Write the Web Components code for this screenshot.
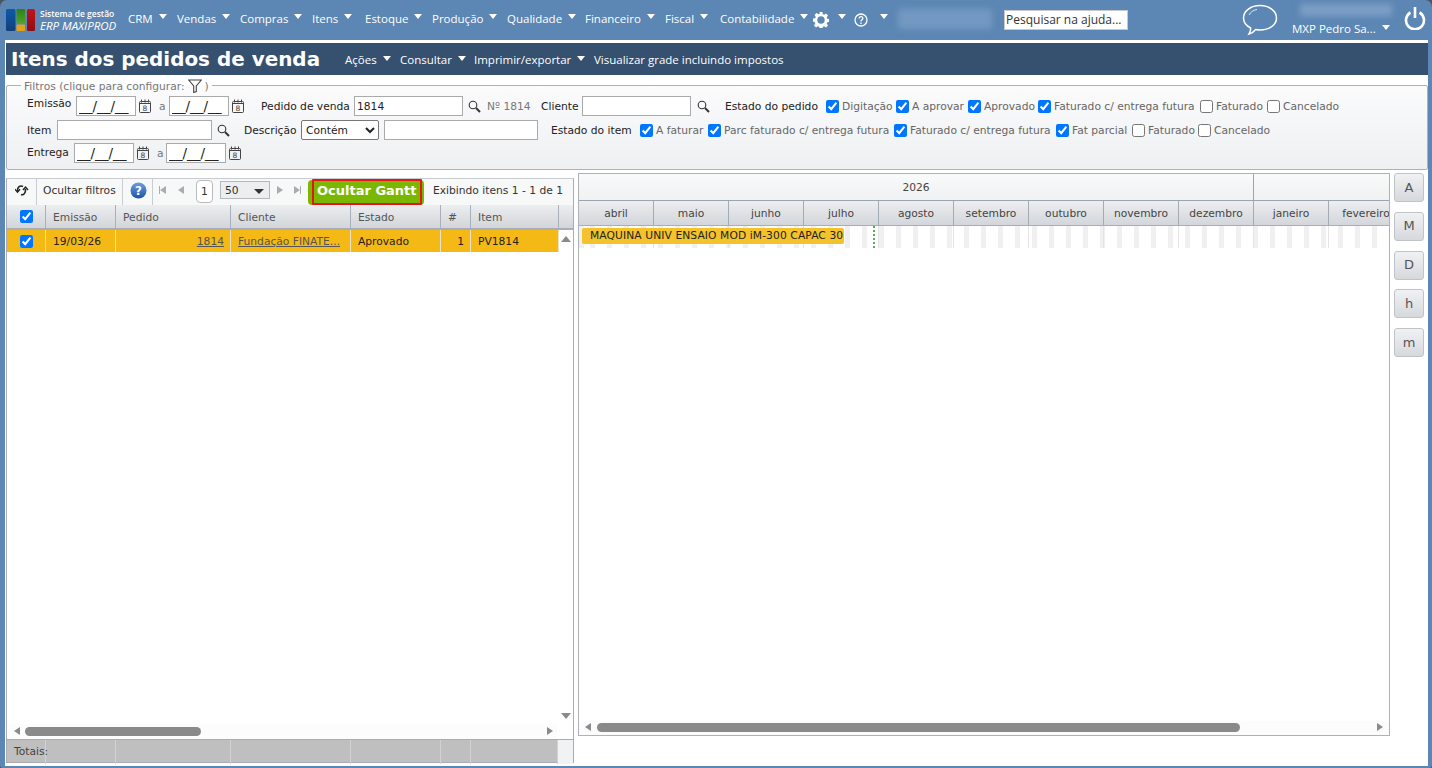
<!DOCTYPE html>
<html lang="pt-BR">
<head>
<meta charset="utf-8">
<title>Itens dos pedidos de venda</title>
<style>
    html, body { margin: 0; height: 100%; background: #4a5560; overflow: hidden; }
    body { font-family: "DejaVu Sans", sans-serif; font-size: 10.7px; color: #222; }
</style>
</head>
<body>
<the-app>
    <the-topbar></the-topbar>
    <the-page>
        <the-titlebar></the-titlebar>
        <the-filters></the-filters>
        <the-main>
            <the-grid></the-grid>
            <the-gantt></the-gantt>
            <the-scales></the-scales>
        </the-main>
    </the-page>
</the-app>

<script>
const ICON_SEARCH = `<svg width="13" height="13" viewBox="0 0 13 13" fill="none" stroke="#333"><circle cx="5" cy="5" r="3.8" stroke-width="1.1"/><path d="M8 8l4 4" stroke-width="2"/></svg>`
const ICON_CAL = `<svg width="12" height="14" viewBox="0 0 12 14" fill="none" stroke="#444"><rect x=".5" y="2.5" width="11" height="11" rx="1"/><path d="M2.5 0.5v3M6 0.5v3M9.5 0.5v3" /><path d="M1 4.5h10" /><text x="6" y="12" font-size="7.5" font-family="DejaVu Sans" text-anchor="middle" fill="#444" stroke="none">8</text></svg>`

class TheApp extends HTMLElement {
    constructor() {
        super()
        const shadow = this.attachShadow({ mode: 'open' })
        shadow.innerHTML = `
        <style>
            :host {
                display: flex;
                flex-direction: column;
                width: 1432px;
                height: 768px;
                box-sizing: border-box;
                background: #5c86b3;
                border-radius: 7px 7px 3px 3px;
                overflow: hidden;
            }
        </style>
        <slot></slot>
        `
    }
}

class TheMenuItem extends HTMLElement {
    constructor() {
        super()
        const shadow = this.attachShadow({ mode: 'open' })
        shadow.innerHTML = `
        <style>
            :host {
                display: flex;
                align-items: center;
                flex: none;
                color: #fff;
                white-space: nowrap;
                font-family: var(--menu-font, "DejaVu Sans", sans-serif);
                font-size: var(--menu-size, 11px);
            }
            .arrow {
                width: 0;
                height: 0;
                margin-left: 6px;
                margin-top: -3px;
                border-left: 4.5px solid transparent;
                border-right: 4.5px solid transparent;
                border-top: 5px solid #fff;
            }
        </style>
        <slot></slot><span class="arrow"></span>
        `
    }
}

class TheTopbar extends HTMLElement {
    constructor() {
        super()
        const shadow = this.attachShadow({ mode: 'open' })
        shadow.innerHTML = `
        <style>
            :host {
                display: flex;
                align-items: center;
                flex: none;
                height: 40px;
                box-sizing: border-box;
                padding-left: 6px;
                color: #fff;
                font-family: "Open Sans", sans-serif;
                --menu-font: "Open Sans", sans-serif;
                --menu-size: 11.5px;
            }
            .logo { flex: none; width: 29px; height: 22px; }
            .brand {
                flex: none;
                width: 88px;
                margin-left: 5px;
                line-height: 11px;
                font-size: 8.5px;
                font-family: "Open Sans", sans-serif;
                white-space: nowrap;
            }
            .brand b { display: block; font-weight: 600; }
            .brand i { display: block; font-size: 11.5px; line-height: 13px; font-style: italic; font-weight: 500; }
            .menu { display: flex; align-items: center; height: 100%; margin-top: -4px; }
            .menu svg { margin-top: 3px; }
            .blur-a {
                flex: none;
                width: 94px;
                height: 20px;
                margin-left: 10px;
                margin-top: -3px;
                background: #7399c2;
                filter: blur(3px);
            }
            .search {
                flex: none;
                box-sizing: border-box;
                width: 124px;
                height: 20px;
                margin-left: 12px;
                margin-top: -1px;
                padding: 0 0 0 1px;
                border: 1px solid #c8c8c8;
                background: #fff;
                font: 12px "Open Sans", sans-serif;
                color: #333;
            }
            .chat { flex: none; margin-left: 114px; }
            .user { flex: none; width: 104px; margin-left: 14px; }
            .blur-b { width: 92px; height: 12px; margin: 0 0 5px 8px; background: #7d9fc6; filter: blur(3px); }
            .power { flex: none; margin-left: 8px; margin-top: -4px; }
        </style>
        <svg class="logo" viewBox="0 0 29 22">
            <defs>
                <linearGradient id="lb" x1="0" y1="0" x2="0" y2="1"><stop offset="0" stop-color="#0d5aa8"/><stop offset="1" stop-color="#123f7c"/></linearGradient>
                <linearGradient id="lg" x1="0" y1="0" x2="0" y2="1"><stop offset="0" stop-color="#2f7f1a"/><stop offset="1" stop-color="#4fa324"/></linearGradient>
                <linearGradient id="lr" x1="0" y1="0" x2="0" y2="1"><stop offset="0" stop-color="#c4141a"/><stop offset="1" stop-color="#8f0d12"/></linearGradient>
            </defs>
            <rect x="0" y="0" width="9.500" height="22" rx="1.500" fill="url(#lb)"/>
            <rect x="10.500" y="0" width="8.500" height="14" rx="1" fill="url(#lg)"/>
            <rect x="10.500" y="15.500" width="8.500" height="6.500" rx="1" fill="#e2a413"/>
            <rect x="21" y="0" width="8" height="22" rx="1.500" fill="url(#lr)"/>
        </svg>
        <div class="brand"><b>Sistema de gestão</b><i>ERP MAXIPROD</i></div>
        <div class="menu">
            <the-menu-item style="width:49px">CRM</the-menu-item>
            <the-menu-item style="width:63px">Vendas</the-menu-item>
            <the-menu-item style="width:72px">Compras</the-menu-item>
            <the-menu-item style="width:53px">Itens</the-menu-item>
            <the-menu-item style="width:67px">Estoque</the-menu-item>
            <the-menu-item style="width:75px">Produção</the-menu-item>
            <the-menu-item style="width:78px">Qualidade</the-menu-item>
            <the-menu-item style="width:80px">Financeiro</the-menu-item>
            <the-menu-item style="width:55px">Fiscal</the-menu-item>
            <the-menu-item style="width:93px">Contabilidade</the-menu-item>
            <the-menu-item style="width:41px"><svg width="16" height="16" viewBox="0 0 16 16"><path fill="#fff" fill-rule="evenodd" d="M6.600 0h2.800l.4 2.200 1.300.6 1.900-1.300 2 2-1.300 1.900.6 1.300 2.200.4v2.800l-2.200.4-.6 1.300 1.300 1.900-2 2-1.900-1.300-1.300.6-.4 2.200H6.600l-.4-2.200-1.300-.6-1.900 1.300-2-2 1.300-1.900-.6-1.300L0 9.400V6.600l2.200-.4.6-1.300L1.500 3l2-2 1.900 1.300 1.300-.6zM8 4.300a3.700 3.700 0 100 7.400 3.700 3.700 0 000-7.400z"/></svg><span style="width:3px"></span></the-menu-item>
            <the-menu-item><svg width="14" height="14" viewBox="0 0 14 14" fill="none" stroke="#fff" stroke-width="1.300"><circle cx="7" cy="7" r="6"/><path d="M5.200 5.400c0-2.400 3.800-2.200 3.600 0 0 1.400-1.800 1.400-1.800 3"/><path d="M7 9.600v1.400"/></svg><span style="width:6px"></span></the-menu-item>
        </div>
        <div class="blur-a"></div>
        <input class="search" value="Pesquisar na ajuda...">
        <svg class="chat" width="36" height="32" viewBox="0 0 36 32" fill="none" stroke="#fff" stroke-width="1.500">
            <path d="M18 1.500c9 0 16.500 5.300 16.500 12.500S27 26 18 26c-1.500 0-3-.2-4.300-.5-1.500 2-4 3.700-6.700 4.500 1-1.600 1.700-3.500 1.700-6C4 21.700 1.500 18 1.500 14 1.500 6.800 9 1.500 18 1.500z"/>
            <path d="M7 11c1.500-3 4.500-5 8-5.500" stroke-width="1" opacity=".8"/>
        </svg>
        <div class="user">
            <div class="blur-b"></div>
            <the-menu-item>MXP Pedro Sa...</the-menu-item>
        </div>
        <svg class="power" width="22" height="24" viewBox="0 0 22 24" fill="none" stroke="#fff" stroke-width="2.600">
            <path d="M6.500 6.500a9 9 0 109 0"/>
            <path d="M11 1v11"/>
        </svg>
        `
    }
}

class ThePage extends HTMLElement {
    constructor() {
        super()
        const shadow = this.attachShadow({ mode: 'open' })
        shadow.innerHTML = `
        <style>
            :host {
                display: flex;
                flex-direction: column;
                flex: none;
                height: 726px;
                margin: 0 4px 2px 5px;
                padding: 3px 0 0 1px;
                box-sizing: border-box;
                background: #fff;
            }
        </style>
        <slot></slot>
        `
    }
}

class TheTitlebar extends HTMLElement {
    constructor() {
        super()
        const shadow = this.attachShadow({ mode: 'open' })
        shadow.innerHTML = `
        <style>
            :host {
                display: flex;
                align-items: center;
                flex: none;
                height: 32px;
                padding-left: 5px;
                background: #36506f;
                color: #fff;
                --menu-font: "Open Sans", sans-serif;
                --menu-size: 11.5px;
            }
            h1 {
                margin: 0 25px 0 0;
                width: 309px;
                font: bold 19.95px "DejaVu Sans", sans-serif;
                white-space: nowrap;
            }
            .menu { display: flex; align-items: center; margin-top: 1px; }
            .plain { font: 11.5px "Open Sans", sans-serif; }
        </style>
        <h1>Itens dos pedidos de venda</h1>
        <div class="menu">
            <the-menu-item style="width:55px">Ações</the-menu-item>
            <the-menu-item style="width:74px">Consultar</the-menu-item>
            <the-menu-item style="width:120px">Imprimir/exportar</the-menu-item>
            <span class="plain">Visualizar grade incluindo impostos</span>
        </div>
        `
    }
}

class TheCheck extends HTMLElement {
    constructor() {
        super()
        const shadow = this.attachShadow({ mode: 'open' })
        const on = this.hasAttribute('on') ? 'checked' : ''
        shadow.innerHTML = `
        <style>
            :host {
                display: inline-flex;
                align-items: center;
                flex: none;
                color: #666;
                white-space: nowrap;
            }
            input {
                width: 13px;
                height: 13px;
                margin: 0 3px 0 0;
                accent-color: #0075ff;
            }
        </style>
        <input type="checkbox" ${on}><slot></slot>
        `
    }
}

class TheFilters extends HTMLElement {
    constructor() {
        super()
        const shadow = this.attachShadow({ mode: 'open' })
        shadow.innerHTML = `
        <style>
            :host {
                display: block;
                flex: none;
                position: relative;
                height: 85px;
                margin-top: 10px;
                box-sizing: border-box;
                padding: 10px 0 0 20px;
                border: 1px solid #aeb2b6;
                border-radius: 2px;
                background: linear-gradient(#fbfbfc, #eef0f2);
                font-size: 10.7px;
                color: #222;
            }
            .legend {
                position: absolute;
                top: -6px;
                left: 14px;
                padding: 0 3px;
                display: flex;
                align-items: center;
                gap: 3px;
                background: linear-gradient(#fff 5px, #fbfbfc 5px);
                color: #777;
                line-height: 12px;
            }
            .legend svg { transform: translateY(-1px); }
            .row { display: flex; align-items: center; height: 20px; margin-bottom: 3px; white-space: nowrap; }
            .row2 { margin-top: 4px; }
            input[type=text] {
                box-sizing: border-box;
                height: 20px;
                padding: 0 2px;
                flex: none;
                border: 1px solid #aaa;
                background: #fff;
                font: 10.7px "DejaVu Sans", sans-serif;
                color: #222;
            }
            input.date { width: 60px; font-size: 13.5px; }
            select {
                box-sizing: border-box;
                width: 78px;
                height: 20px;
                flex: none;
                border: 1px solid #777;
                border-radius: 2px;
                background: #fff;
                font: 10.7px "DejaVu Sans", sans-serif;
                color: #222;
            }
            .muted { color: #777; }
            svg { flex: none; }
        </style>
        <div class="legend">Filtros (clique para configurar:
            <svg width="14" height="14" viewBox="0 0 14 14" fill="none" stroke="#444" stroke-width="1.100"><path d="M.7 1h12.600L8.300 7v5.500l-2.600 1V7z"/></svg>)
        </div>
        <div class="row">
            <span style="width:49px;margin-top:-6px">Emissão</span>
            <input class="date" type="text" value="__/__/__">
            <span style="margin-left:3px;display:flex">${ICON_CAL}</span>
            <span class="muted" style="margin-left:8px;width:10px">a</span>
            <input class="date" type="text" value="__/__/__">
            <span style="margin-left:3px;display:flex">${ICON_CAL}</span>
            <span style="margin-left:17px;width:93px">Pedido de venda</span>
            <input type="text" value="1814" style="width:109px">
            <span style="margin-left:5px;width:19px;display:flex">${ICON_SEARCH}</span>
            <span class="muted" style="width:54px">Nº 1814</span>
            <span style="width:41px">Cliente</span>
            <input type="text" style="width:109px">
            <span style="margin-left:6px;width:28px;display:flex">${ICON_SEARCH}</span>
            <span style="width:101px">Estado do pedido</span>
            <the-check on style="width:70px">Digitação</the-check>
            <the-check on style="width:72px">A aprovar</the-check>
            <the-check on style="width:70px">Aprovado</the-check>
            <the-check on style="width:162px">Faturado c/ entrega futura</the-check>
            <the-check style="width:67px">Faturado</the-check>
            <the-check>Cancelado</the-check>
        </div>
        <div class="row row2">
            <span style="width:30px">Item</span>
            <input type="text" style="width:155px">
            <span style="margin-left:5px;width:27px;display:flex">${ICON_SEARCH}</span>
            <span style="width:57px">Descrição</span>
            <select><option>Contém</option></select>
            <input type="text" style="width:154px;margin-left:5px">
            <span style="margin-left:13px;width:89px">Estado do item</span>
            <the-check on style="width:68px">A faturar</the-check>
            <the-check on style="width:186px">Parc faturado c/ entrega futura</the-check>
            <the-check on style="width:162px">Faturado c/ entrega futura</the-check>
            <the-check on style="width:76px">Fat parcial</the-check>
            <the-check style="width:66px">Faturado</the-check>
            <the-check>Cancelado</the-check>
        </div>
        <div class="row">
            <span style="width:47px;margin-top:-2px">Entrega</span>
            <input class="date" type="text" value="__/__/__">
            <span style="margin-left:3px;display:flex">${ICON_CAL}</span>
            <span class="muted" style="margin-left:8px;width:9px">a</span>
            <input class="date" type="text" value="__/__/__">
            <span style="margin-left:3px;display:flex">${ICON_CAL}</span>
        </div>
        `
    }
}

class TheMain extends HTMLElement {
    constructor() {
        super()
        const shadow = this.attachShadow({ mode: 'open' })
        shadow.innerHTML = `
        <style>
            :host { display: flex; align-items: flex-start; flex: none; margin-top: 3px; }
        </style>
        <slot></slot>
        `
    }
}

class TheGrid extends HTMLElement {
    constructor() {
        super()
        const shadow = this.attachShadow({ mode: 'open' })
        const cols = '39px 70px 115px 120px 90px 30px 88px 1fr'
        shadow.innerHTML = `
        <style>
            :host {
                display: flex;
                flex-direction: column;
                flex: none;
                width: 568px;
                height: 585px;
                margin-top: 5px;
                box-sizing: border-box;
                border: 1px solid #a9adb3;
                border-top: 1px solid #c8ccd0;
                font-size: 10.7px;
                color: #222;
            }
            .tools {
                display: flex;
                align-items: center;
                flex: none;
                height: 26px;
                box-sizing: border-box;
                padding-bottom: 4px;
                white-space: nowrap;
                color: #333;
                background: #f7f8f8;
            }
            .sep { flex: none; align-self: flex-start; width: 1px; height: 26px; background: #c9cdd1; }
            .nav { flex: none; width: 0; height: 0; border-top: 4px solid transparent; border-bottom: 4px solid transparent; }
            .nav.l { border-right: 6px solid #a8adb2; }
            .nav.r { border-left: 6px solid #a8adb2; }
            .bar { flex: none; width: 1px; height: 8px; background: #a8adb2; }
            .page {
                flex: none;
                align-self: flex-start;
                margin-top: 1px;
                box-sizing: border-box;
                width: 17px;
                height: 23px;
                line-height: 22px;
                text-align: center;
                border: 1px solid #bbb;
                border-radius: 4px;
                background: #fff;
            }
            .size {
                flex: none;
                display: flex;
                align-items: center;
                justify-content: space-between;
                box-sizing: border-box;
                width: 50px;
                height: 18px;
                padding: 0 5px 0 4px;
                border: 1px solid #b5b9bd;
                background: #eceef0;
            }
            .size i { width: 0; height: 0; border-left: 5px solid transparent; border-right: 5px solid transparent; border-top: 5px solid #333; margin-top: 3px; }
            .gantt {
                flex: none;
                align-self: flex-start;
                margin-top: 1px;
                box-sizing: border-box;
                width: 116px;
                height: 25px;
                padding-left: 4px;
                background: #7ab800;
                border-radius: 4px;
                position: relative;
                color: #fff;
                font: bold 13px/21px "DejaVu Sans", sans-serif;
            }
            .gantt::after {
                content: "";
                position: absolute;
                left: 4px;
                right: 2px;
                top: -1px;
                bottom: 0;
                border: 2px solid #e8141c;
                border-radius: 1px;
            }
            .gantt span { display: block; padding-left: 5px; }
            .head, .row { display: grid; grid-template-columns: ${cols}; flex: none; }
            .head {
                height: 25px;
                box-sizing: border-box;
                background: linear-gradient(#eceef0, #d2d5d9);
                border-bottom: 2px solid #a9adb8;
                color: #555;
            }
            .head > div { display: flex; align-items: center; padding: 1px 0 0 7px; border-right: 1px solid #a9b0ba; }
            .head > div:first-child, .row > div:first-child { justify-content: center; padding: 0; }
            .head > div:last-child { border-right: 0; }
            .row { height: 22px; background: linear-gradient(90deg, #f5b915 551px, #fff 551px); }
            .row > div { display: flex; align-items: center; padding: 0 6px 0 7px; border-right: 1px solid #e9e2c8; white-space: nowrap; overflow: hidden; }
            .row > div:last-child { border-right: 0; }
            .row a { color: #555; text-decoration: underline; }
            .end { justify-content: flex-end; }
            input { width: 13px; height: 13px; margin: 0; accent-color: #0075ff; }
            .body { position: relative; flex: 1; min-height: 0; }
            .up, .down { position: absolute; left: 554px; width: 0; height: 0; border-left: 5px solid transparent; border-right: 5px solid transparent; }
            .up { top: -16px; border-bottom: 6px solid #8a8a8a; }
            .down { bottom: 20px; border-top: 6px solid #8a8a8a; }
            .hscroll { position: absolute; left: 0; right: 16px; bottom: 0; height: 15px; background: #fcfcfc; }
            .thumb { position: absolute; left: 18px; top: 3px; width: 176px; height: 9px; border-radius: 5px; background: #8a8a8a; }
            .al, .ar { position: absolute; top: 3px; width: 0; height: 0; border-top: 4.500px solid transparent; border-bottom: 4.500px solid transparent; }
            .al { left: 7px; border-right: 6px solid #8a8a8a; }
            .ar { left: 540px; border-left: 6px solid #8a8a8a; }
            .totals {
                display: grid;
                grid-template-columns: 39px 70px 115px 120px 90px 30px 87px 1fr;
                flex: none;
                height: 23px;
                box-sizing: border-box;
                border-top: 1px solid #a9adb3;
                background: #bfbfbf;
                color: #444;
            }
            .totals > div { border-right: 1px solid #d2d2d2; line-height: 24px; padding-left: 7px; white-space: nowrap; }
            .totals > div:last-child { border-right: 0; background: #f0f2f4; }
        </style>
        <div class="tools">
            <span style="width:29px;display:flex;justify-content:center">
                <svg width="14" height="13" viewBox="0 0 14 13" fill="none" stroke="#222" stroke-width="1.600">
                    <path d="M8 2.500C5 1 2.300 3 2.500 7"/>
                    <path d="M6 10.500C8.500 11.500 10.700 9.500 10.500 5"/>
                    <path d="M0 5.200l2.500 3 2.500-3M8 6l2.500-3L13 6" stroke-width="1.400"/>
                </svg>
            </span>
            <span class="sep"></span>
            <span style="margin-left:6px;width:79px">Ocultar filtros</span>
            <span class="sep"></span>
            <svg style="margin-left:7px;flex:none" width="17" height="17" viewBox="0 0 17 17">
                <defs><linearGradient id="h" x1="0" y1="0" x2="0" y2="1"><stop offset="0" stop-color="#6a9ee0"/><stop offset="1" stop-color="#1f52a8"/></linearGradient></defs>
                <circle cx="8.500" cy="8.500" r="8" fill="url(#h)"/>
                <text x="8.500" y="13" font-size="12" font-weight="bold" font-family="DejaVu Sans" fill="#fff" text-anchor="middle">?</text>
            </svg>
            <span class="sep" style="margin-left:5px"></span>
            <span class="bar" style="margin-left:6px"></span><span class="nav l"></span>
            <span class="nav l" style="margin-left:12px"></span>
            <span class="page" style="margin-left:12px">1</span>
            <span class="size" style="margin-left:7px">50<i></i></span>
            <span class="nav r" style="margin-left:7px"></span>
            <span class="nav r" style="margin-left:11px"></span><span class="bar"></span>
            <span class="gantt" style="margin-left:7px"><span>Ocultar Gantt</span></span>
            <span style="margin-left:9px">Exibindo itens 1 - 1 de 1</span>
        </div>
        <div class="head">
            <div><input type="checkbox" checked></div>
            <div>Emissão</div><div>Pedido</div><div>Cliente</div><div>Estado</div><div>#</div><div>Item</div><div></div>
        </div>
        <div class="row">
            <div><input type="checkbox" checked></div>
            <div>19/03/26</div>
            <div class="end"><a>1814</a></div>
            <div><a>Fundação FINATE...</a></div>
            <div>Aprovado</div>
            <div class="end">1</div>
            <div>PV1814</div>
            <div></div>
        </div>
        <div class="body">
            <span class="up"></span>
            <span class="down"></span>
            <div class="hscroll"><span class="al"></span><div class="thumb"></div><span class="ar"></span></div>
        </div>
        <div class="totals">
            <div style="overflow:visible">Totais:</div><div></div><div></div><div></div><div></div><div></div><div></div><div></div>
        </div>
        `
    }
}

class TheGantt extends HTMLElement {
    constructor() {
        super()
        const shadow = this.attachShadow({ mode: 'open' })
        const months = ['abril', 'maio', 'junho', 'julho', 'agosto', 'setembro', 'outubro', 'novembro', 'dezembro', 'janeiro', 'fevereiro']
        shadow.innerHTML = `
        <style>
            :host {
                display: flex;
                flex-direction: column;
                flex: none;
                position: relative;
                width: 812px;
                height: 563px;
                margin-left: 4px;
                box-sizing: border-box;
                border: 1px solid #aeb2b6;
                font-size: 10.7px;
                color: #444;
                overflow: hidden;
            }
            .years { display: flex; flex: none; height: 27px; background: linear-gradient(#f9fafa, #eff1f2); border-bottom: 1px solid #9aa5b1; box-sizing: border-box; }
            .years div { flex: none; display: flex; align-items: center; justify-content: center; box-sizing: border-box; border-right: 1px solid #9aa5b1; height: 26px; }
            .months { display: flex; flex: none; height: 25px; box-sizing: border-box; background: linear-gradient(#eceef0, #d3d6da); border-bottom: 1px solid #a9adb8; }
            .months div { flex: none; width: 75px; box-sizing: border-box; display: flex; align-items: center; justify-content: center; border-right: 1px solid #a3abb5; white-space: nowrap; }
            .chart { position: relative; flex: 1; }
            .stripes {
                height: 22px;
                background:
                    repeating-linear-gradient(90deg, transparent 0 74px, #e4e4e4 74px 75px),
                    repeating-linear-gradient(90deg, #f0f0f0 0 5px, #fff 5px 17px);
                background-position: 0 0, 11px 0;
            }
            .task {
                position: absolute;
                left: 3px;
                top: 2px;
                box-sizing: border-box;
                width: 262px;
                height: 16px;
                padding-left: 8px;
                background: #f4c22b;
                border-radius: 2px;
                color: #222;
                line-height: 16px;
                letter-spacing: .1px;
                white-space: nowrap;
            }
            .today { position: absolute; left: 294px; top: 0; height: 22px; border-left: 2px dotted #5ea65e; }
            .hscroll { position: absolute; left: 0; right: 0; bottom: 0; height: 14px; background: #fcfcfc; }
            .thumb { position: absolute; left: 18px; top: 2px; width: 643px; height: 9px; border-radius: 5px; background: #8a8a8a; }
            .al, .ar { position: absolute; top: 2px; width: 0; height: 0; border-top: 4.500px solid transparent; border-bottom: 4.500px solid transparent; }
            .al { left: 6px; border-right: 6px solid #8a8a8a; }
            .ar { right: 6px; border-left: 6px solid #8a8a8a; }
        </style>
        <div class="years"><div style="width:675px">2026</div><div style="width:200px;border-right:0"></div></div>
        <div class="months">${months.map(m => `<div>${m}</div>`).join('')}</div>
        <div class="chart">
            <div class="stripes"></div>
            <div class="task">MAQUINA UNIV ENSAIO MOD iM-300 CAPAC 30</div>
            <div class="today"></div>
            <div class="hscroll"><span class="al"></span><div class="thumb"></div><span class="ar"></span></div>
        </div>
        `
    }
}

class TheScales extends HTMLElement {
    constructor() {
        super()
        const shadow = this.attachShadow({ mode: 'open' })
        shadow.innerHTML = `
        <style>
            :host {
                display: flex;
                flex-direction: column;
                gap: 9.750px;
                flex: none;
                width: 30px;
                margin-left: 4px;
            }
            div {
                box-sizing: border-box;
                height: 29px;
                padding-bottom: 1px;
                display: flex;
                align-items: center;
                justify-content: center;
                border: 1px solid #c0c4c8;
                border-radius: 3px;
                background: linear-gradient(#f0f1f3, #d6d9dc);
                font-size: 13px;
                color: #555;
            }
        </style>
        <div>A</div><div>M</div><div>D</div><div>h</div><div>m</div>
        `
    }
}

customElements.define('the-app', TheApp)
customElements.define('the-menu-item', TheMenuItem)
customElements.define('the-topbar', TheTopbar)
customElements.define('the-page', ThePage)
customElements.define('the-titlebar', TheTitlebar)
customElements.define('the-check', TheCheck)
customElements.define('the-filters', TheFilters)
customElements.define('the-main', TheMain)
customElements.define('the-grid', TheGrid)
customElements.define('the-gantt', TheGantt)
customElements.define('the-scales', TheScales)
</script>
</body>
</html>
